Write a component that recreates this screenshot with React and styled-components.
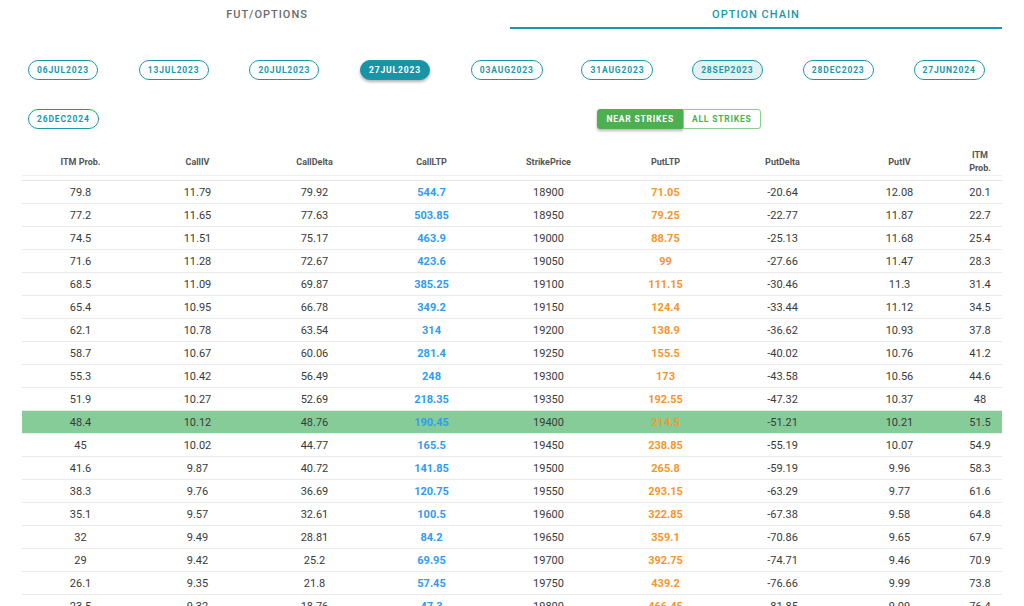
import React from "react";
import styled, { createGlobalStyle } from "styled-components";

const TEAL = "#1c97a9";
const GREEN = "#4caf50";

const GlobalStyle = createGlobalStyle`
  body {
    margin: 0;
    background: #ffffff;
    font-family: Roboto, "Liberation Sans", Arial, sans-serif;
    color: #333333;
  }
`;

const Page = styled.div`
  width: 980px;
  margin-left: 22px;
`;

const Tabs = styled.div`
  display: grid;
  grid-template-columns: 1fr 1fr;
`;

const Tab = styled.div`
  height: 29px;
  padding-top: 8px;
  box-sizing: border-box;
  text-align: center;
  font-size: 11px;
  font-weight: 500;
  letter-spacing: 1px;
  color: ${(p) => (p.$active ? TEAL : "#6b6b6b")};
  border-bottom: 2px solid ${(p) => (p.$active ? TEAL : "transparent")};
  margin-left: ${(p) => (p.$active ? "-2px" : "0")};
`;

const ChipGrid = styled.div`
  display: grid;
  grid-template-columns: repeat(9, 110.7px);
  row-gap: 29px;
  margin-top: 31px;
`;

const ChipCell = styled.div`
  padding-left: 6px;
  display: flex;
  align-items: center;
`;

const Chip = styled.div`
  height: 20px;
  box-sizing: border-box;
  padding: 0 8px;
  border-radius: 10px;
  border: 1px solid ${TEAL};
  display: flex;
  align-items: center;
  font-size: 8.5px;
  font-weight: 700;
  letter-spacing: 0.85px;
  color: ${(p) => (p.$selected ? "#ffffff" : TEAL)};
  background: ${(p) =>
    p.$selected ? "#1994a6" : p.$hover ? "#e3f1f3" : "#ffffff"};
  box-shadow: ${(p) =>
    p.$selected ? "0 2px 3px rgba(0,0,0,0.3)" : "none"};
`;

const ToggleCell = styled.div`
  grid-column: 6 / span 3;
  padding-left: 22px;
  display: flex;
  align-items: center;
`;

const Toggle = styled.div`
  height: 20px;
  box-sizing: border-box;
  padding: 0 8px;
  display: flex;
  align-items: center;
  font-size: 8.5px;
  font-weight: 700;
  letter-spacing: 0.8px;
  color: ${(p) => (p.$on ? "#ffffff" : GREEN)};
  background: ${(p) => (p.$on ? GREEN : "#ffffff")};
  border: 1px solid ${(p) => (p.$on ? GREEN : "#8bcf8e")};
  border-radius: ${(p) => (p.$on ? "3px 0 0 3px" : "0 3px 3px 0")};
  box-shadow: ${(p) => (p.$on ? "0 2px 3px rgba(0,0,0,0.28)" : "none")};
`;

const COLS = "repeat(8, 117px) 1fr";

const HeadRow = styled.div`
  display: grid;
  grid-template-columns: ${COLS};
  margin-top: 20px;
  height: 26px;
  border-bottom: 1px solid #efefef;
`;

const HeadCell = styled.div`
  display: flex;
  align-items: center;
  justify-content: center;
  text-align: center;
  font-size: 9px;
  font-weight: 700;
  line-height: 13px;
  color: #555555;
  padding: 0 ${(p) => (p.$narrow ? "6px" : "0")};
`;

const Body = styled.div`
  margin-top: 4px;
  border-top: 1px solid #e4e4e4;
`;

const Row = styled.div`
  display: grid;
  grid-template-columns: ${COLS};
  height: 23px;
  box-sizing: border-box;
  border-bottom: 1px solid #e9e9e9;
  background: ${(p) => (p.$atm ? "#86cc99" : "transparent")};
`;

const Cell = styled.div`
  display: flex;
  align-items: center;
  justify-content: center;
  font-size: 11px;
  font-weight: ${(p) => (p.$tone ? 700 : 400)};
  color: ${(p) =>
    p.$tone === "call" ? "#2f9cf0" : p.$tone === "put" ? "#f8952a" : "#3a3a3a"};
`;

const dates = [
  "06JUL2023",
  "13JUL2023",
  "20JUL2023",
  "27JUL2023",
  "03AUG2023",
  "31AUG2023",
  "28SEP2023",
  "28DEC2023",
  "27JUN2024",
  "26DEC2024",
];

const headers = [
  "ITM Prob.",
  "CallIV",
  "CallDelta",
  "CallLTP",
  "StrikePrice",
  "PutLTP",
  "PutDelta",
  "PutIV",
  "ITM Prob.",
];

const rows = [
  ["79.8", "11.79", "79.92", "544.7", "18900", "71.05", "-20.64", "12.08", "20.1"],
  ["77.2", "11.65", "77.63", "503.85", "18950", "79.25", "-22.77", "11.87", "22.7"],
  ["74.5", "11.51", "75.17", "463.9", "19000", "88.75", "-25.13", "11.68", "25.4"],
  ["71.6", "11.28", "72.67", "423.6", "19050", "99", "-27.66", "11.47", "28.3"],
  ["68.5", "11.09", "69.87", "385.25", "19100", "111.15", "-30.46", "11.3", "31.4"],
  ["65.4", "10.95", "66.78", "349.2", "19150", "124.4", "-33.44", "11.12", "34.5"],
  ["62.1", "10.78", "63.54", "314", "19200", "138.9", "-36.62", "10.93", "37.8"],
  ["58.7", "10.67", "60.06", "281.4", "19250", "155.5", "-40.02", "10.76", "41.2"],
  ["55.3", "10.42", "56.49", "248", "19300", "173", "-43.58", "10.56", "44.6"],
  ["51.9", "10.27", "52.69", "218.35", "19350", "192.55", "-47.32", "10.37", "48"],
  ["48.4", "10.12", "48.76", "190.45", "19400", "214.5", "-51.21", "10.21", "51.5"],
  ["45", "10.02", "44.77", "165.5", "19450", "238.85", "-55.19", "10.07", "54.9"],
  ["41.6", "9.87", "40.72", "141.85", "19500", "265.8", "-59.19", "9.96", "58.3"],
  ["38.3", "9.76", "36.69", "120.75", "19550", "293.15", "-63.29", "9.77", "61.6"],
  ["35.1", "9.57", "32.61", "100.5", "19600", "322.85", "-67.38", "9.58", "64.8"],
  ["32", "9.49", "28.81", "84.2", "19650", "359.1", "-70.86", "9.65", "67.9"],
  ["29", "9.42", "25.2", "69.95", "19700", "392.75", "-74.71", "9.46", "70.9"],
  ["26.1", "9.35", "21.8", "57.45", "19750", "439.2", "-76.66", "9.99", "73.8"],
  ["23.5", "9.32", "18.76", "47.3", "19800", "466.45", "-81.85", "9.09", "76.4"],
];

const tone = (i) => (i === 3 ? "call" : i === 5 ? "put" : undefined);

export default function App() {
  return (
    <Page>
      <GlobalStyle />
      <Tabs>
        <Tab>FUT/OPTIONS</Tab>
        <Tab $active>OPTION CHAIN</Tab>
      </Tabs>

      <ChipGrid>
        {dates.map((d) => (
          <ChipCell key={d}>
            <Chip $selected={d === "27JUL2023"} $hover={d === "28SEP2023"}>
              {d}
            </Chip>
          </ChipCell>
        ))}
        <ToggleCell>
          <Toggle $on>NEAR STRIKES</Toggle>
          <Toggle>ALL STRIKES</Toggle>
        </ToggleCell>
      </ChipGrid>

      <HeadRow>
        {headers.map((h, i) => (
          <HeadCell key={i} $narrow={i === headers.length - 1}>
            {h}
          </HeadCell>
        ))}
      </HeadRow>
      <Body>
        {rows.map((r) => (
          <Row key={r[4]} $atm={r[4] === "19400"}>
            {r.map((v, i) => (
              <Cell key={i} $tone={tone(i)}>
                {v}
              </Cell>
            ))}
          </Row>
        ))}
      </Body>
    </Page>
  );
}
